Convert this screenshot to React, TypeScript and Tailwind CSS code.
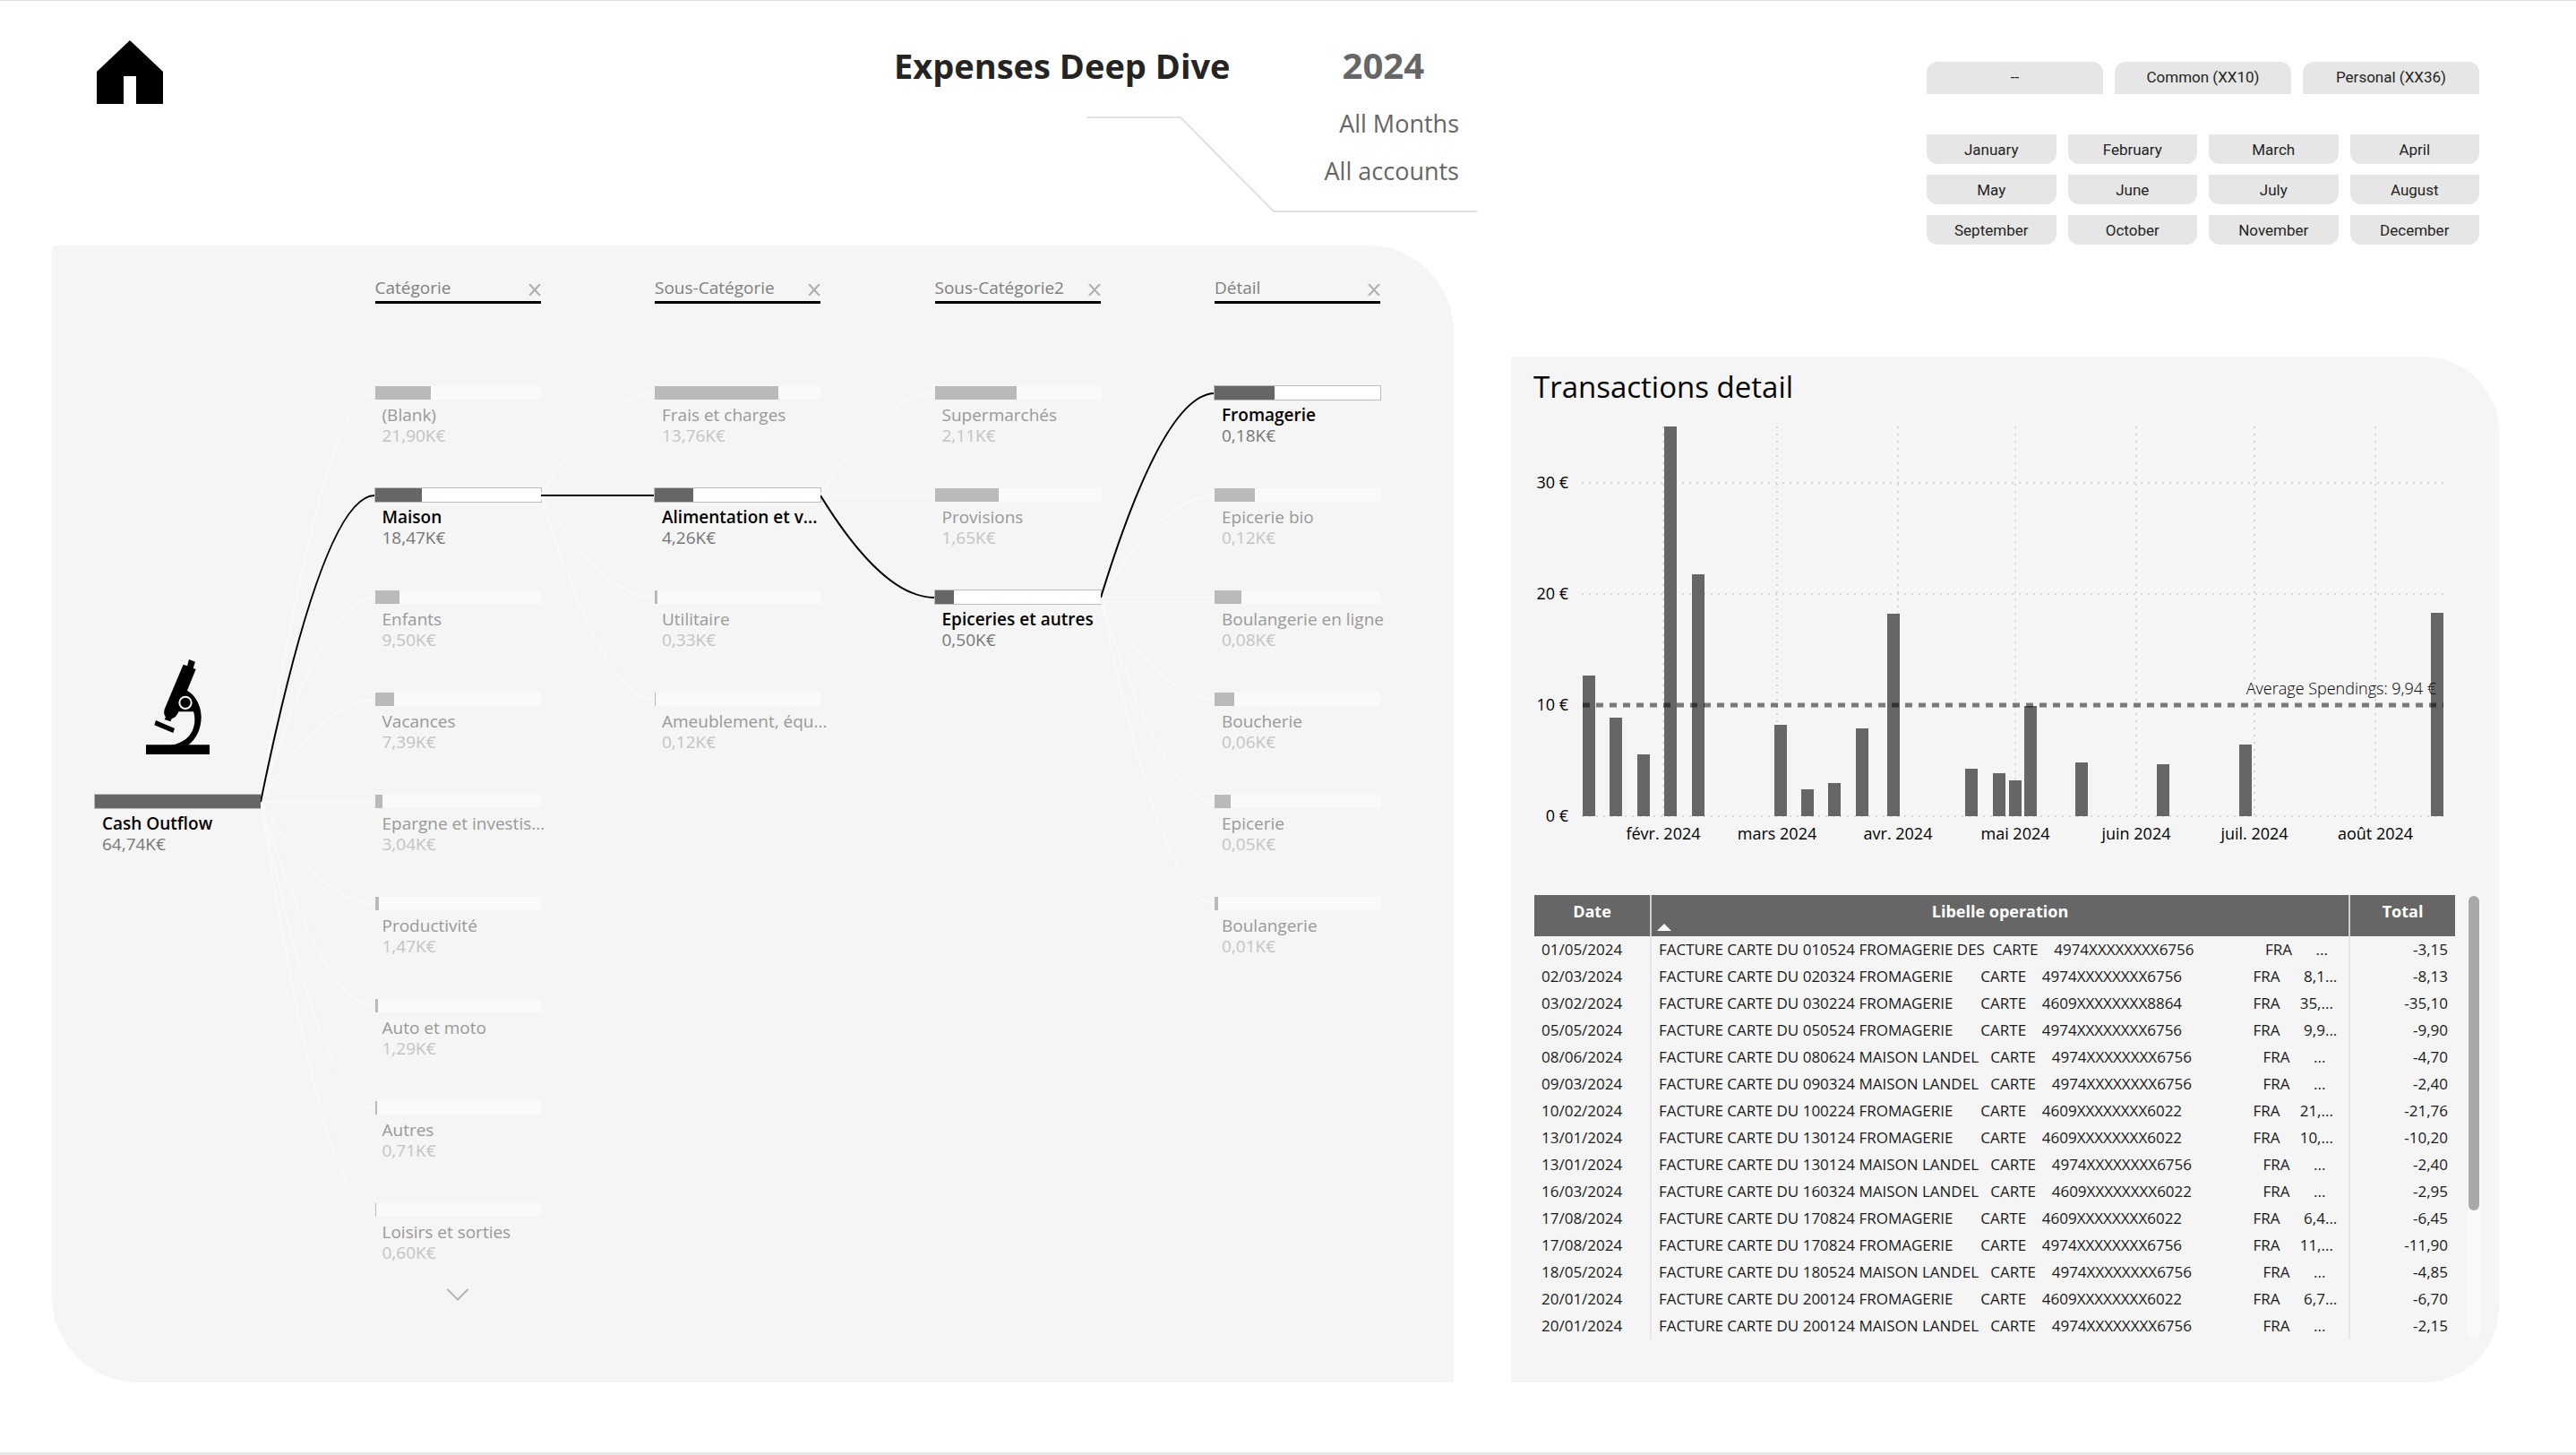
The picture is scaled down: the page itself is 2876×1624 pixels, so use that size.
import React from "react";
import { ChevronDown } from "lucide-react";

type TreeItem = { label: string; value: string; share: number; active?: boolean };
type Level = { title: string; items: TreeItem[]; more?: boolean };

const LEVELS: Level[] = [
  {
    title: "Catégorie",
    more: true,
    items: [
      { label: "(Blank)", value: "21,90K€", share: 34 },
      { label: "Maison", value: "18,47K€", share: 28.5, active: true },
      { label: "Enfants", value: "9,50K€", share: 14.7 },
      { label: "Vacances", value: "7,39K€", share: 11.4 },
      { label: "Epargne et investis...", value: "3,04K€", share: 4.7 },
      { label: "Productivité", value: "1,47K€", share: 2.3 },
      { label: "Auto et moto", value: "1,29K€", share: 2 },
      { label: "Autres", value: "0,71K€", share: 1.1 },
      { label: "Loisirs et sorties", value: "0,60K€", share: 0.9 },
    ],
  },
  {
    title: "Sous-Catégorie",
    items: [
      { label: "Frais et charges", value: "13,76K€", share: 74.5 },
      { label: "Alimentation et v...", value: "4,26K€", share: 23.1, active: true },
      { label: "Utilitaire", value: "0,33K€", share: 1.8 },
      { label: "Ameublement, équ...", value: "0,12K€", share: 0.6 },
    ],
  },
  {
    title: "Sous-Catégorie2",
    items: [
      { label: "Supermarchés", value: "2,11K€", share: 49.5 },
      { label: "Provisions", value: "1,65K€", share: 38.7 },
      { label: "Epiceries et autres", value: "0,50K€", share: 11.7, active: true },
    ],
  },
  {
    title: "Détail",
    items: [
      { label: "Fromagerie", value: "0,18K€", share: 36.3, active: true },
      { label: "Epicerie bio", value: "0,12K€", share: 24.2 },
      { label: "Boulangerie en ligne", value: "0,08K€", share: 16 },
      { label: "Boucherie", value: "0,06K€", share: 12 },
      { label: "Epicerie", value: "0,05K€", share: 9.6 },
      { label: "Boulangerie", value: "0,01K€", share: 2.2 },
    ],
  },
];

const ACCOUNTS = ["--", "Common (XX10)", "Personal (XX36)"];
const MONTHS = [
  "January", "February", "March", "April", "May", "June",
  "July", "August", "September", "October", "November", "December",
];

// x position and amount of each column of the chart
const BARS: [number, number][] = [
  [80, 12.65], [110, 8.9], [141, 5.6], [171, 35.1], [202, 21.8], [294, 8.2],
  [324, 2.45], [354, 2.98], [385, 7.9], [420, 18.25], [507, 4.25], [538, 3.9],
  [556, 3.2], [573, 9.9], [630, 4.88], [721, 4.72], [813, 6.45], [1027, 18.35],
];
const MONTH_TICKS: [number, string][] = [
  [170, "févr. 2024"], [297, "mars 2024"], [432, "avr. 2024"], [563, "mai 2024"],
  [698, "juin 2024"], [830, "juil. 2024"], [965, "août 2024"],
];

type Op = { date: string; text: string; shop: "F" | "D" | "M"; card: string; tail: string; total: string };
const OPS: Op[] = [
  { date: "01/05/2024", text: "010524", shop: "D", card: "4974XXXXXXXX6756", tail: "...", total: "-3,15" },
  { date: "02/03/2024", text: "020324", shop: "F", card: "4974XXXXXXXX6756", tail: "8,1...", total: "-8,13" },
  { date: "03/02/2024", text: "030224", shop: "F", card: "4609XXXXXXXX8864", tail: "35,...", total: "-35,10" },
  { date: "05/05/2024", text: "050524", shop: "F", card: "4974XXXXXXXX6756", tail: "9,9...", total: "-9,90" },
  { date: "08/06/2024", text: "080624", shop: "M", card: "4974XXXXXXXX6756", tail: "...", total: "-4,70" },
  { date: "09/03/2024", text: "090324", shop: "M", card: "4974XXXXXXXX6756", tail: "...", total: "-2,40" },
  { date: "10/02/2024", text: "100224", shop: "F", card: "4609XXXXXXXX6022", tail: "21,...", total: "-21,76" },
  { date: "13/01/2024", text: "130124", shop: "F", card: "4609XXXXXXXX6022", tail: "10,...", total: "-10,20" },
  { date: "13/01/2024", text: "130124", shop: "M", card: "4974XXXXXXXX6756", tail: "...", total: "-2,40" },
  { date: "16/03/2024", text: "160324", shop: "M", card: "4609XXXXXXXX6022", tail: "...", total: "-2,95" },
  { date: "17/08/2024", text: "170824", shop: "F", card: "4609XXXXXXXX6022", tail: "6,4...", total: "-6,45" },
  { date: "17/08/2024", text: "170824", shop: "F", card: "4974XXXXXXXX6756", tail: "11,...", total: "-11,90" },
  { date: "18/05/2024", text: "180524", shop: "M", card: "4974XXXXXXXX6756", tail: "...", total: "-4,85" },
  { date: "20/01/2024", text: "200124", shop: "F", card: "4609XXXXXXXX6022", tail: "6,7...", total: "-6,70" },
  { date: "20/01/2024", text: "200124", shop: "M", card: "4974XXXXXXXX6756", tail: "...", total: "-2,15" },
];

function describe(op: Op) {
  const shop = { D: "FROMAGERIE DES  ", F: "FROMAGERIE       ", M: "MAISON LANDEL   " }[op.shop];
  const gap = op.tail === "..." ? "      " : op.tail[1] === "," ? "      " : "     ";
  return `FACTURE CARTE DU ${op.text} ${shop}CARTE    ${op.card}                  FRA${gap}${op.tail}`;
}

function HomeIcon() {
  return (
    <svg viewBox="0 0 74 71" className="h-[71px] w-[74px]" aria-hidden="true">
      <path d="M37 0 L74 35 V71 H44 V40 H30 V71 H0 V35 Z" fill="#000" />
    </svg>
  );
}

function MicroscopeIcon() {
  return (
    <svg viewBox="39 33 213 318" className="mx-auto h-[106px] w-[71px]" aria-hidden="true">
      <path d="M164 50 L177 55 L183 33 L204 41 L197 62 L206 66 L177 137 C204 152 225 188 224 228 C223 266 208 300 180 320 H120 C168 314 201 284 202 236 C202 222 200 214 198 208 H148 C143 222 134 229 125 232 L121 241 L101 234 L105 226 C98 218 98 205 103 195 Z" />
      <circle cx="171" cy="178" r="20" fill="#000" stroke="#f5f5f5" strokeWidth="6" />
      <path d="M72 237 L135 264 L130 279 L67 253 Z" />
      <path d="M39 319 H252 V351 H39 Z" />
    </svg>
  );
}

function TreeNode({ item }: { item: TreeItem }) {
  const on = item.active;
  return (
    <button type="button" className="block h-[66px] w-full text-left whitespace-nowrap">
      <span className={on ? "block h-[15px] bg-white outline-1 outline-[#bdbdbd]" : "block h-[15px] bg-[#fafafa]"}>
        <span
          className={on ? "block h-full bg-[#666666]" : "block h-full bg-[#bababa]"}
          style={{ width: `${item.share}%` }}
        />
      </span>
      <span
        className={
          on
            ? "mt-[6px] block pl-2 text-[19px] leading-[23px] font-semibold text-black"
            : "mt-[6px] block pl-2 text-[19px] leading-[23px] text-[#999999]"
        }
      >
        {item.label}
      </span>
      <span
        className={
          on
            ? "block pl-2 text-[19px] leading-[23px] text-[#777777]"
            : "block pl-2 text-[19px] leading-[23px] text-[#c4c4c4]"
        }
      >
        {item.value}
      </span>
    </button>
  );
}

const rowY = (row: number) => 8 + row * 114;

function Links({ from, items }: { from: number; items: TreeItem[] }) {
  const curve = (to: number) => `M0 ${rowY(from)} Q55 ${rowY(to)} 100 ${rowY(to)}`;
  const order = items.map((item, i) => ({ item, i })).sort((a, b) => Number(!!a.item.active) - Number(!!b.item.active));
  return (
    <svg viewBox="0 0 100 978" preserveAspectRatio="none" className="h-[978px] w-full" aria-hidden="true">
      {order.map(({ item, i }) => (
        <path
          key={item.label}
          d={curve(i)}
          fill="none"
          stroke={item.active ? "#000" : "#f9f9f9"}
          strokeWidth="2"
          vectorEffect="non-scaling-stroke"
        />
      ))}
    </svg>
  );
}

function DecompositionTree() {
  const parents = [4, 1, 1, 2];
  return (
    <section
      aria-label="Cash outflow breakdown"
      className="rounded-tr-[96px] rounded-bl-[96px] bg-[#f5f5f5] pt-[33px] pr-[82px] pb-[76px] pl-[48px]"
    >
      <div className="grid grid-cols-[185px_1fr_185px_1fr_185px_1fr_185px_1fr_185px]">
        <div className="pt-[429px]">
          <MicroscopeIcon />
          <div className="mt-[45px]">
            <TreeNode item={{ label: "Cash Outflow", value: "64,74K€", share: 100, active: true }} />
          </div>
        </div>
        {LEVELS.map((level, n) => (
          <React.Fragment key={level.title}>
            <div className="pt-[124px]">
              <Links from={parents[n]} items={level.items} />
            </div>
            <div>
              <div className="flex h-8 items-center justify-between border-b-3 border-black">
                <h3 className="text-[19px] leading-[23px] text-[#808080]">{level.title}</h3>
                <button type="button" aria-label={`Remove ${level.title}`}>
                  <svg viewBox="0 0 14 13" className="mt-1 h-[13px] w-[14px]" aria-hidden="true">
                    <path d="M1 0 L13 13 M13 0 L1 13" stroke="#adadad" strokeWidth="2" fill="none" />
                  </svg>
                </button>
              </div>
              <ul className="mt-[92px] flex flex-col gap-12">
                {level.items.map((item) => (
                  <li key={item.label}>
                    <TreeNode item={item} />
                  </li>
                ))}
              </ul>
              {level.more && (
                <button type="button" aria-label="Show more" className="mx-auto mt-[14px] block text-[#b3b0ad]">
                  <ChevronDown strokeWidth={1} className="h-11 w-11" />
                </button>
              )}
            </div>
          </React.Fragment>
        ))}
      </div>
    </section>
  );
}

function SpendingChart() {
  const base = 456;
  const y = (v: number) => Math.round(base - v * 12.39);
  return (
    <svg viewBox="0 0 1103 500" className="block w-full" role="img" aria-label="Spending by date">
      <g stroke="#d6d6d6" strokeWidth="2" strokeDasharray="2 6">
        {[0, 20, 30].map((v) => (
          <line key={v} x1="79" x2="1041" y1={y(v)} y2={y(v)} />
        ))}
        {MONTH_TICKS.map(([x]) => (
          <line key={x} x1={x} x2={x} y1="21" y2="458" />
        ))}
      </g>
      {BARS.map(([x, v]) => (
        <rect key={x} x={x} y={y(v)} width="14" height={base - y(v)} fill="#666666" />
      ))}
      <line x1="80" x2="1041" y1="332" y2="332" stroke="#000" strokeOpacity="0.5" strokeWidth="5" strokeDasharray="8 7" />
      <g fill="#000" fontSize="18">
        {[0, 10, 20, 30].map((v) => (
          <text key={v} x="64" y={y(v) + 6} textAnchor="end">{`${v} €`}</text>
        ))}
        {MONTH_TICKS.map(([x, label]) => (
          <text key={label} x={x} y="482" textAnchor="middle">{label}</text>
        ))}
      </g>
      <text x="1033" y="320" textAnchor="end" fontSize="18" fontWeight="300" fill="#000">
        Average Spendings: 9,94 €
      </text>
    </svg>
  );
}

function TransactionsTable() {
  return (
    <div className="mt-[44px] flex gap-[14px] pr-[21px] pl-[26px]">
      <table className="min-w-0 flex-1 table-fixed border-collapse text-[17px] leading-[30px] text-[#1a1a1a]">
        <colgroup>
          <col className="w-[130px]" />
          <col />
          <col className="w-[118px]" />
        </colgroup>
        <thead>
          <tr className="h-[46px] bg-[#666666] align-top text-[18px] leading-9 font-bold text-white">
            <th scope="col">Date</th>
            <th scope="col" aria-sort="ascending" className="relative border-x-2 border-[#cfcfcf]">
              Libelle operation
              <span className="absolute bottom-[6px] left-1.5 h-[8px] w-4 bg-white [clip-path:polygon(50%_0,100%_100%,0_100%)]" />
            </th>
            <th scope="col">Total</th>
          </tr>
        </thead>
        <tbody>
          {OPS.map((op, i) => (
            <tr key={i}>
              <td className="pl-2">{op.date}</td>
              <td className="overflow-hidden border-x-2 border-[#e6e6e6] pl-2 whitespace-pre">{describe(op)}</td>
              <td className="pr-2 text-right">{op.total}</td>
            </tr>
          ))}
        </tbody>
      </table>
      <div className="w-[14px] rounded-full bg-[#fafafa] px-px pt-px">
        <div className="h-[351px] rounded-full bg-[#a8a8a6]" />
      </div>
    </div>
  );
}

export default function App() {
  return (
    <main className="flex min-h-screen flex-col border-t border-b-3 border-t-[#e0e0e0] border-b-[#e8e8e8] bg-white font-['Open_Sans','Noto_Sans',sans-serif]">
      <header className="grid grid-cols-[890fr_651px_502fr_617px] pr-[108px] pl-[108px]">
        <a href="#home" aria-label="Home" className="mt-[44px] justify-self-start">
          <HomeIcon />
        </a>
        <div className="relative mt-[44px]">
          <svg viewBox="0 0 436 108" className="absolute top-[85px] right-0 h-[108px] w-[436px]" aria-hidden="true">
            <path d="M0 1 H105 L209 106 H436" fill="none" stroke="#e1e1e1" strokeWidth="2" />
          </svg>
          <div className="flex items-center justify-between pr-[59px] text-[38px] leading-[56px] font-bold whitespace-nowrap">
            <h1 className="text-[#252423]">Expenses Deep Dive</h1>
            <p className="text-[40px] text-[#666666]">2024</p>
          </div>
          <div className="relative mt-2.5 pr-5 text-right text-[27px] leading-[53px] text-[#666666]">
            <p>All Months</p>
            <p>All accounts</p>
          </div>
        </div>
        <div className="col-start-4 h-[273px] pt-[68px] font-[Roboto,sans-serif] text-[17px] text-[#252423]">
          <div role="group" aria-label="Account" className="grid grid-cols-3 gap-[13px]">
            {ACCOUNTS.map((a) => (
              <button type="button" key={a} className="h-9 rounded-t-xl bg-[#e6e6e6]">{a}</button>
            ))}
          </div>
          <div role="group" aria-label="Month" className="mt-[45px] grid grid-cols-4 gap-x-[13px] gap-y-3">
            {MONTHS.map((m) => (
              <button type="button" key={m} className="h-[33px] rounded-b-xl bg-[#e6e6e6] pt-[3px]">{m}</button>
            ))}
          </div>
        </div>
      </header>
      <div className="grid grid-cols-[1565fr_1103fr] gap-16 pr-[86px] pb-[78px] pl-[58px]">
        <DecompositionTree />
        <section
          aria-label="Transactions detail"
          className="mt-[124px] rounded-tr-[84px] rounded-br-[84px] bg-[#f5f5f5] pb-12"
        >
          <h2 className="pt-[11px] pl-[25px] text-[33px] leading-[46px] text-black">Transactions detail</h2>
          <SpendingChart />
          <TransactionsTable />
        </section>
      </div>
    </main>
  );
}
